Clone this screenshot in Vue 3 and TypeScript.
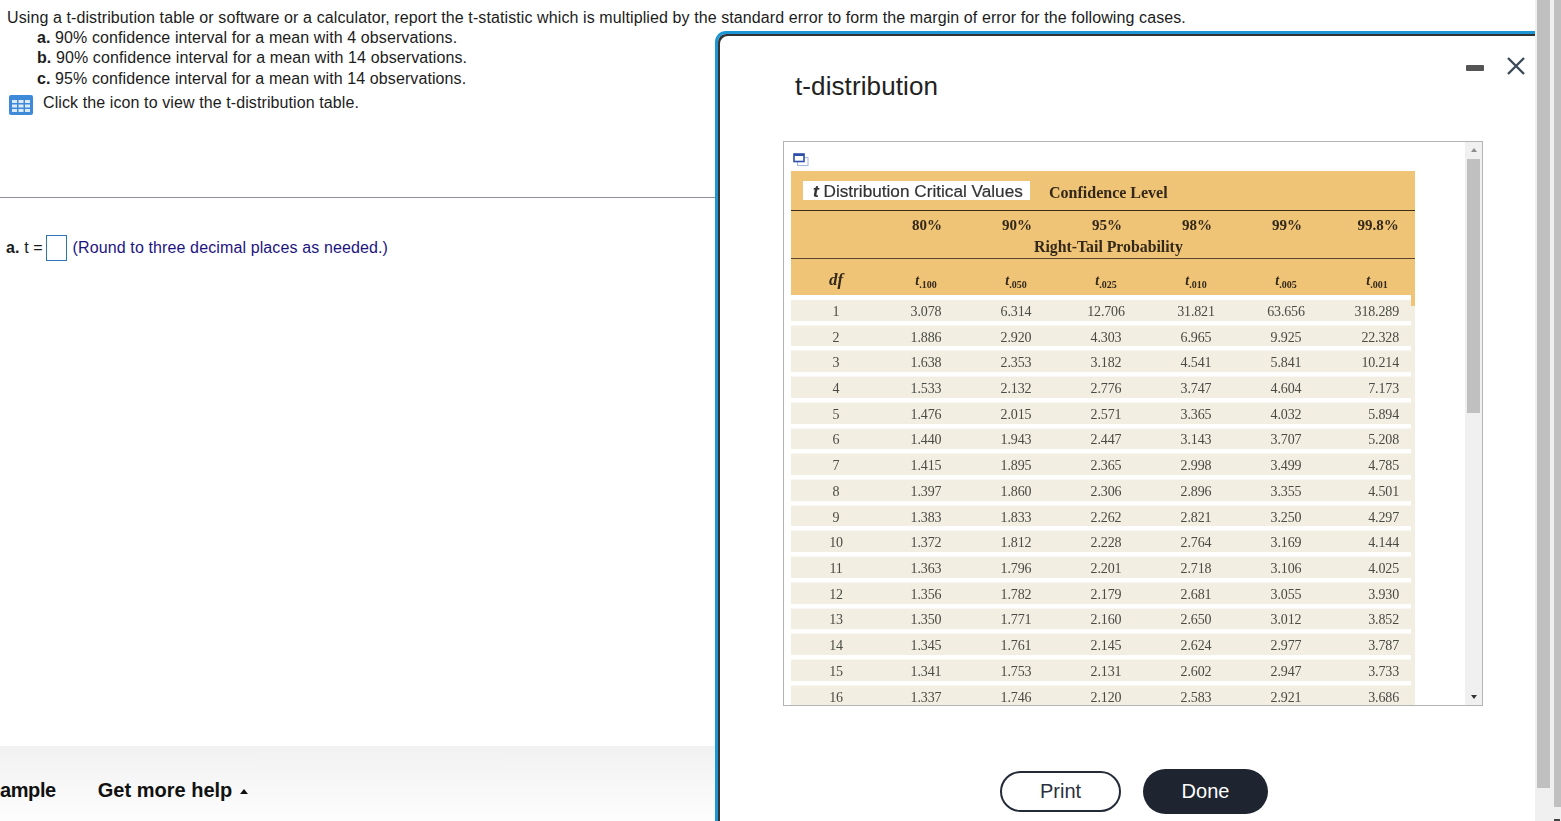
<script setup lang="ts">
const levels: string[] = ['80%', '90%', '95%', '98%', '99%', '99.8%']
const tails: string[] = ['.100', '.050', '.025', '.010', '.005', '.001']
const rows: string[][] = [
  ['1', '3.078', '6.314', '12.706', '31.821', '63.656', '318.289'],
  ['2', '1.886', '2.920', '4.303', '6.965', '9.925', '22.328'],
  ['3', '1.638', '2.353', '3.182', '4.541', '5.841', '10.214'],
  ['4', '1.533', '2.132', '2.776', '3.747', '4.604', '7.173'],
  ['5', '1.476', '2.015', '2.571', '3.365', '4.032', '5.894'],
  ['6', '1.440', '1.943', '2.447', '3.143', '3.707', '5.208'],
  ['7', '1.415', '1.895', '2.365', '2.998', '3.499', '4.785'],
  ['8', '1.397', '1.860', '2.306', '2.896', '3.355', '4.501'],
  ['9', '1.383', '1.833', '2.262', '2.821', '3.250', '4.297'],
  ['10', '1.372', '1.812', '2.228', '2.764', '3.169', '4.144'],
  ['11', '1.363', '1.796', '2.201', '2.718', '3.106', '4.025'],
  ['12', '1.356', '1.782', '2.179', '2.681', '3.055', '3.930'],
  ['13', '1.350', '1.771', '2.160', '2.650', '3.012', '3.852'],
  ['14', '1.345', '1.761', '2.145', '2.624', '2.977', '3.787'],
  ['15', '1.341', '1.753', '2.131', '2.602', '2.947', '3.733'],
  ['16', '1.337', '1.746', '2.120', '2.583', '2.921', '3.686'],
]
</script>

<template>
  <div class="page">
    <div class="main">
      <section class="question">
        <p class="intro">Using a t-distribution table or software or a calculator, report the t-statistic which is multiplied by the standard error to form the margin of error for the following cases.</p>
        <p class="case"><b>a.</b> 90% confidence interval for a mean with 4 observations.</p>
        <p class="case"><b>b.</b> 90% confidence interval for a mean with 14 observations.</p>
        <p class="case"><b>c.</b> 95% confidence interval for a mean with 14 observations.</p>
        <div class="link-row">
          <svg class="grid-icon" width="24" height="20" viewBox="0 0 24 20">
            <rect x="0" y="0" width="24" height="20" rx="2" fill="#3f8ad8" />
            <g fill="#dce9f8">
              <rect x="3" y="5" width="5" height="3" /><rect x="9.5" y="5" width="5" height="3" /><rect x="16" y="5" width="5" height="3" />
              <rect x="3" y="9.5" width="5" height="3" /><rect x="9.5" y="9.5" width="5" height="3" /><rect x="16" y="9.5" width="5" height="3" />
              <rect x="3" y="14" width="5" height="3" /><rect x="9.5" y="14" width="5" height="3" /><rect x="16" y="14" width="5" height="3" />
            </g>
          </svg>
          <span>Click the icon to view the t-distribution table.</span>
        </div>
      </section>
      <hr class="rule" />
      <div class="answer">
        <b>a.</b><span class="eq">t =</span><span class="box"></span><span class="hint">(Round to three decimal places as needed.)</span>
      </div>
      <footer class="footer">
        <span class="sample">ample</span>
        <span class="help">Get more help <i class="tri"></i></span>
      </footer>
    </div>

    <div class="page-bars">
      <div class="bar"><div class="thumb thumb-a"></div></div>
      <div class="bar"><div class="thumb thumb-b"></div><div class="bar-arrow"></div></div>
    </div>

    <div class="modal">
      <div class="window-btns">
        <span class="minimize"></span>
        <svg width="20" height="20" viewBox="0 0 20 20"><path d="M2 2 L18 18 M18 2 L2 18" stroke="#3c4a58" stroke-width="2.4" fill="none" /></svg>
      </div>
      <h1 class="title">t-distribution</h1>
      <div class="panel">
        <div class="panel-body">
          <svg class="copy-icon" width="16" height="13" viewBox="0 0 16 13">
            <rect x="4.5" y="4.5" width="10.5" height="8" fill="#fff" stroke="#a9b6dc" />
            <rect x="1" y="1" width="10" height="7.5" fill="#fff" stroke="#2f4fa8" stroke-width="1.6" />
            <rect x="1" y="1" width="10" height="2" fill="#2f4fa8" />
          </svg>
          <div class="table">
            <div class="head-title">
              <span class="white-title"><i>t</i> Distribution Critical Values</span>
              <span class="conf">Confidence Level</span>
            </div>
            <div class="head-levels">
              <span></span>
              <span v-for="l in levels" :key="l">{{ l }}</span>
            </div>
            <div class="head-tail">Right-Tail Probability</div>
            <div class="head-df">
              <span class="df">df</span>
              <span v-for="t in tails" :key="t" class="tv"><i>t</i><sub>{{ t }}</sub></span>
            </div>
            <div v-for="(r, i) in rows" :key="r[0]" class="row" :class="{ first: i === 0 }">
              <span v-for="(c, j) in r" :key="j">{{ c }}</span>
            </div>
          </div>
        </div>
        <div class="panel-bar">
          <span class="arrow up"></span>
          <div class="panel-thumb"></div>
          <span class="arrow down"></span>
        </div>
      </div>
      <div class="actions">
        <button class="btn print">Print</button>
        <button class="btn done">Done</button>
      </div>
    </div>
  </div>
</template>

<style>
html, body { margin: 0; background: #fff; overflow: hidden; }
</style>

<style scoped>
.page {
  position: relative;
  display: flex;
  width: 1561px;
  height: 821px;
  overflow: hidden;
  background: #fff;
  font-family: "Liberation Sans", Arial, sans-serif;
  font-size: 16px;
  color: #1c1c1c;
}
.main {
  width: 1535px;
  height: 821px;
  display: flex;
  flex-direction: column;
  flex: none;
}
.question { padding: 7px 0 0 7px; height: 197px; box-sizing: border-box; letter-spacing: 0.1px; }
.intro { margin: 0; line-height: 21.5px; }
.case { margin: 0; line-height: 20.5px; padding-left: 30px; }
.case:nth-of-type(2) { margin-top: -1px; }
.link-row { display: flex; align-items: flex-start; gap: 10px; margin: 4px 0 0 2px; line-height: 20px; }
.grid-icon { flex: none; margin-top: 2px; }
.rule { width: 715px; height: 1px; margin: 0; border: 0; background: #8b909b; flex: none; }
.answer {
  display: flex;
  align-items: center;
  height: 26px;
  margin: 36px 0 0 6px;
  padding-top: 1px;
}
.answer .box { margin-top: -1px; }
.eq { margin-left: 5px; }
.box { width: 19px; height: 24px; border: 1px solid #2c74b8; margin: 0 6px 0 3px; }
.hint { color: #1d1480; letter-spacing: 0.12px; }
.footer {
  margin-top: auto;
  width: 715px;
  height: 75px;
  flex: none;
  display: flex;
  align-items: center;
  gap: 42px;
  padding-top: 14px;
  box-sizing: border-box;
  font-size: 20px;
  font-weight: 700;
  color: #111;
  background: linear-gradient(#f1f1f1, #fdfdfd);
}
.sample { letter-spacing: -0.4px; }
.tri {
  display: inline-block;
  width: 0;
  height: 0;
  border-left: 4.5px solid transparent;
  border-right: 4.5px solid transparent;
  border-bottom: 5px solid #111;
  vertical-align: 3px;
  margin-left: 2px;
}
.page-bars {
  display: flex;
  flex: none;
  width: 26px;
  height: 821px;
  background: #f0f0f0;
}
.bar { padding-left: 2px; width: 15px; box-sizing: content-box; }
.bar + .bar { padding-left: 4px; width: 7px; }
.thumb { background: #c0c0c0; }
.thumb-a { height: 788px; width: 13px; }
.thumb-b { height: 807px; width: 7px; }
.bar-arrow { width: 6px; height: 2px; margin-top: 12px; background: #444; }

.modal {
  position: absolute;
  left: 715px;
  top: 31px;
  width: 820px;
  height: 800px;
  box-sizing: border-box;
  display: flex;
  flex-direction: column;
  background: #fff;
  border: solid #1d96d6;
  border-width: 3px 0 0 3px;
  border-top-left-radius: 11px;
  box-shadow: inset 2px 2px 0 #333;
}
.window-btns {
  position: absolute;
  top: 22px;
  right: 9px;
  display: flex;
  align-items: center;
  gap: 22px;
}
.minimize { width: 18px; height: 6px; background: #555; border-radius: 1px; margin-top: 4px; }
.title {
  margin: 36px 0 0 77px;
  height: 33px;
  font-size: 26px;
  line-height: 32px;
  font-weight: 400;
  letter-spacing: 0.1px;
  color: #222;
}
.panel {
  display: flex;
  width: 700px;
  height: 565px;
  margin: 38px 0 0 65px;
  box-sizing: border-box;
  border: 1px solid #b4b4b4;
  flex: none;
}
.panel-body { flex: 1; min-width: 0; overflow: hidden; padding: 11px 0 0 7px; }
.copy-icon { display: block; margin: 0 0 5px 2px; }
.panel-bar {
  width: 17px;
  flex: none;
  background: #f0f0f0;
  display: flex;
  flex-direction: column;
  align-items: center;
}
.arrow { width: 0; height: 0; border-left: 3.5px solid transparent; border-right: 3.5px solid transparent; }
.arrow.up { border-bottom: 4px solid #8c8c8c; margin-top: 6px; }
.arrow.down { border-top: 4px solid #333; margin-top: auto; margin-bottom: 6px; }
.panel-thumb { width: 13px; height: 254px; background: #c0c0c0; margin-top: 7px; }

.table {
  width: 624px;
  font-family: "Liberation Serif", "Times New Roman", serif;
  filter: blur(0.4px);
  color: #33281a;
}
.head-title {
  height: 40px;
  box-sizing: border-box;
  background: #efc476;
  border-bottom: 1.5px solid #3a2a18;
  display: flex;
  align-items: center;
  padding-left: 12px;
  gap: 19px;
}
.white-title {
  background: #fff;
  width: 227px;
  height: 19px;
  line-height: 21px;
  padding-left: 10px;
  box-sizing: border-box;
  font-family: "Liberation Sans", Arial, sans-serif;
  font-size: 17.2px;
  color: #333;
  white-space: nowrap;
  -webkit-text-stroke: 0.2px #333;
}
.white-title i { font-weight: 700; }
.conf { font-weight: 700; font-size: 16px; margin-top: 4px; }
.head-levels, .head-df, .row {
  display: grid;
  grid-template-columns: repeat(6, 90px) 84px;
  justify-items: center;
  align-items: center;
}
.head-levels span:last-child, .head-df span:last-child { padding-left: 8px; }
.row span:last-child { justify-self: end; padding-right: 16px; }
.head-levels {
  height: 26px;
  background: #efc476;
  font-weight: 700;
  font-size: 15px;
  padding: 2px 0 0 1px;
  box-sizing: border-box;
}
.head-tail {
  height: 22px;
  box-sizing: border-box;
  background: #efc476;
  border-bottom: 1.5px solid #5a4230;
  padding-left: 243px;
  width: 624px;
  font-weight: 700;
  font-size: 15.8px;
  line-height: 19px;
}
.head-df {
  height: 36px;
  background: #efc476;
  padding: 5px 0 0 0;
  box-sizing: border-box;
}
.df { font-style: italic; font-weight: 700; font-size: 17px; }
.tv { font-size: 14px; font-weight: 700; line-height: 14px; margin-top: 3px; }
.tv sub { font-size: 10px; vertical-align: -3px; line-height: 0; }
.row {
  height: 25.73px;
  padding-top: 8px;
  box-sizing: border-box;
  font-size: 14px;
  letter-spacing: -0.15px;
  color: #4a4a44;
  background: linear-gradient(#fff, #fff) 0 0 / 620px 4.5px no-repeat, #f2efe2;
}
.row.first {
  background: linear-gradient(#fff, #fff) 0 0 / 620px 5px no-repeat,
    linear-gradient(#efc476, #efc476) 100% 0 / 4px 11px no-repeat, #f2efe2;
}
.actions {
  display: flex;
  align-items: center;
  gap: 22px;
  margin: 63px 0 0 282px;
}
.btn {
  font-family: "Liberation Sans", Arial, sans-serif;
  font-size: 20px;
  box-sizing: border-box;
  border-radius: 23px;
  padding: 0;
}
.print { width: 121px; height: 41px; background: #fff; color: #2a3040; border: 2px solid #232a38; }
.done { width: 125px; height: 45px; background: #1e2430; color: #fff; border: 0; }
</style>
